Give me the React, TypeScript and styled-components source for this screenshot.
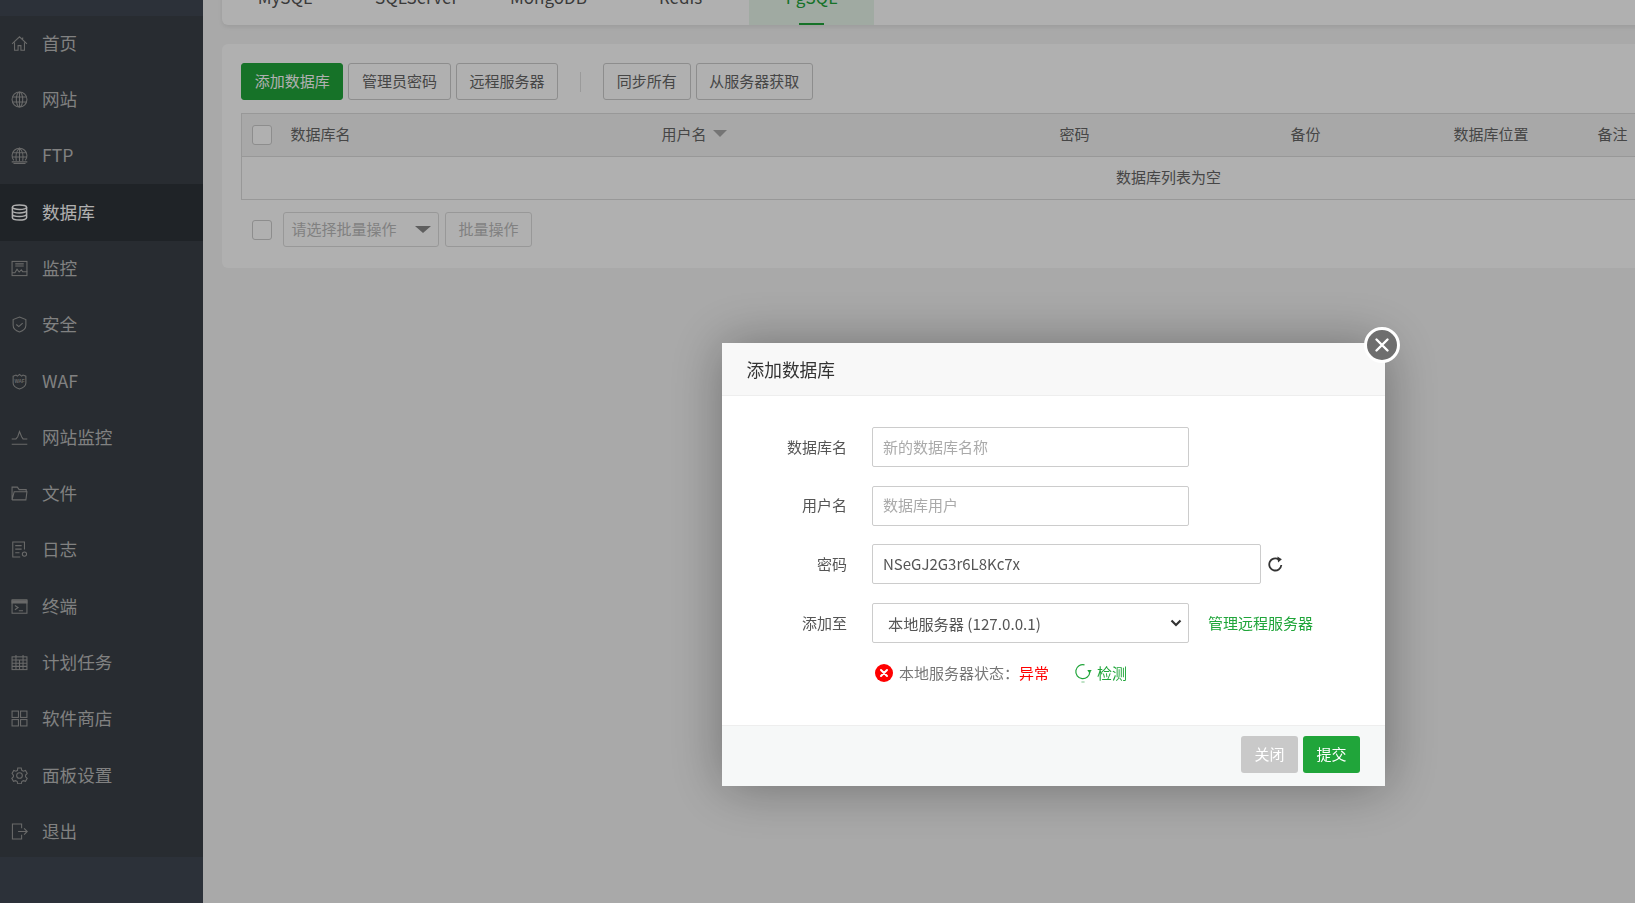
import React from 'react'
import styled, { createGlobalStyle } from 'styled-components'

const FONT = '"Noto Sans CJK SC", "Noto Sans", sans-serif'

const CHEVRON =
  "data:image/svg+xml,%3Csvg xmlns='http://www.w3.org/2000/svg' width='12' height='8' viewBox='0 0 12 8'%3E%3Cpath d='M1.5 1.5 6 6l4.500-4.500' fill='none' stroke='%23333' stroke-width='2.200'/%3E%3C/svg%3E"

const paths: Record<string, React.ReactNode> = {
  home: <path d="M1.500 12.500 12 2.500l10.500 10M5 10.500V21.500h5v-6.500h4v6.500h5V10.500M16.500 3.500v4" />,
  globe: (
    <>
      <circle cx="12" cy="12" r="10.500" />
      <ellipse cx="12" cy="12" rx="4.500" ry="10.500" />
      <path d="M2 8.500h20M2 15.500h20M12 1.500v21" />
    </>
  ),
  ftp: (
    <>
      <path d="M4 19a10.500 10.500 0 1 1 16 0" />
      <path d="M7.500 19.500C6 11 8 5 12 1.500c4 3.500 6 9.500 4.500 18M12 1.500v18.500M2.500 8h19M1.500 14h21" />
      <path d="M1 21h22M3.500 23.500h17" />
    </>
  ),
  database: (
    <>
      <ellipse cx="12" cy="4.500" rx="10" ry="3.200" />
      <path d="M2 4.500v15c0 1.800 4.500 3.200 10 3.200s10-1.400 10-3.200v-15M2 9.500c0 1.800 4.500 3.200 10 3.200s10-1.400 10-3.200M2 14.500c0 1.800 4.500 3.200 10 3.200s10-1.400 10-3.200" />
    </>
  ),
  monitor: (
    <>
      <rect x="1.500" y="2" width="21" height="20" />
      <path d="M6 5.500h12M6 8.500h12M1.500 18h4l3-5 3 4 3-3 2 2.500h6.500" />
    </>
  ),
  shield: (
    <>
      <path d="M12 1.500 21 5v8c0 5-4.500 8-9 9.500C7.500 21 3 18 3 13V5z" />
      <path d="m7.500 12 3.500 3 5.500-5" />
    </>
  ),
  waf: (
    <>
      <path d="M3 4.500 7 3l2 1.500L12 2l3 2.500L17 3l4 1.500V14c0 4.500-4.500 7-9 8.500C7.500 21 3 18.500 3 14z" />
      <text x="12" y="14.500" textAnchor="middle" fontSize="6.500" fontWeight="700" fill="currentColor" stroke="none" fontFamily="Liberation Sans, sans-serif">WAF</text>
    </>
  ),
  pulse: <path d="M1 14h6l2.500-3L12 3.500 15 11l2 3h6M1 21.500h22" />,
  folder: <path d="M1.500 21V3h7.500l2.500 3.500h10V9.500M1.500 21h19.500l1.500-11.500H4.500L1.500 21" />,
  log: (
    <>
      <path d="M19 12V1.500H2.500v21H13" />
      <path d="M6 6.500h9M6 11.500h9M6 16.500h6" />
      <circle cx="19" cy="18.500" r="3" />
    </>
  ),
  terminal: (
    <>
      <rect x="1.500" y="2.500" width="21" height="19" />
      <path d="M1.500 4h21v3h-21z" fill="currentColor" />
      <path d="m5.500 10.500 4.500 3-4.500 3M11 18h6" />
    </>
  ),
  calendar: (
    <>
      <rect x="1.500" y="4" width="21" height="18" />
      <path d="M1.500 8.500h21M1.500 13h21M1.500 17.500h21M7 1.500V22M12 8.500V22M17 1.500V22" />
    </>
  ),
  apps: (
    <>
      <rect x="1.500" y="1.500" width="9" height="9" />
      <rect x="13.500" y="1.500" width="9" height="9" />
      <rect x="1.500" y="13.500" width="9" height="9" />
      <rect x="13.500" y="13.500" width="9" height="9" />
    </>
  ),
  gear: (
    <>
      <path d="M9.500 1.500h5l.7 3.200 2.200 1.200 3.100-1 2.400 4.300-2.300 2.200v2.400l2.300 2.200-2.400 4.300-3.100-1-2.200 1.200-.7 3.200h-5l-.7-3.200-2.200-1.200-3.100 1-2.400-4.300 2.300-2.200v-2.400L1.500 9.200l2.400-4.300 3.100 1 2.200-1.200z" />
      <circle cx="12" cy="12" r="4" />
    </>
  ),
  logout: <path d="M15 7.500V1.500H2v21h13v-6M10 12h13M18.500 7.500 23 12l-4.500 4.500" />,
}

const menu = [
  { name: '首页', icon: 'home' },
  { name: '网站', icon: 'globe' },
  { name: 'FTP', icon: 'ftp' },
  { name: '数据库', icon: 'database', active: true },
  { name: '监控', icon: 'monitor' },
  { name: '安全', icon: 'shield' },
  { name: 'WAF', icon: 'waf' },
  { name: '网站监控', icon: 'pulse' },
  { name: '文件', icon: 'folder' },
  { name: '日志', icon: 'log' },
  { name: '终端', icon: 'terminal' },
  { name: '计划任务', icon: 'calendar' },
  { name: '软件商店', icon: 'apps' },
  { name: '面板设置', icon: 'gear' },
  { name: '退出', icon: 'logout' },
]

const tabs = [
  { name: 'MySQL', w: 126 },
  { name: 'SQLServer', w: 127 },
  { name: 'MongoDB', w: 127 },
  { name: 'Redis', w: 127 },
  { name: 'PgSQL', w: 125, active: true },
]

const columns = [
  { name: '数据库名', w: 371 },
  { name: '用户名', w: 398, sort: true },
  { name: '密码', w: 231 },
  { name: '备份', w: 163 },
  { name: '数据库位置', w: 144 },
  { name: '备注', w: 508 },
]

const App: React.FC = () => {
  return (
    <Page>
      <GlobalStyle />
      <Sidebar>
        <MenuList>
          {menu.map((item) => (
            <MenuItem key={item.name} $active={item.active}>
              <MenuIcon viewBox="0 0 24 24">{paths[item.icon]}</MenuIcon>
              <span>{item.name}</span>
            </MenuItem>
          ))}
        </MenuList>
      </Sidebar>

      <Main>
        <TabCard>
          {tabs.map((tab) => (
            <Tab key={tab.name} $w={tab.w} $active={tab.active}>
              {tab.name}
              {tab.active ? <TabLine /> : null}
            </Tab>
          ))}
        </TabCard>

        <ListCard>
          <Toolbar>
            <PrimaryButton>添加数据库</PrimaryButton>
            <ToolButton>管理员密码</ToolButton>
            <ToolButton>远程服务器</ToolButton>
            <ToolDivider />
            <ToolButton>同步所有</ToolButton>
            <ToolButton>从服务器获取</ToolButton>
          </Toolbar>

          <Table>
            <colgroup>
              <col style={{ width: 39 }} />
              {columns.map((c) => (
                <col key={c.name} style={{ width: c.w }} />
              ))}
            </colgroup>
            <thead>
              <tr>
                <Th>
                  <CheckBox />
                </Th>
                {columns.map((c) => (
                  <Th key={c.name}>
                    {c.name}
                    {c.sort ? <SortArrow /> : null}
                  </Th>
                ))}
              </tr>
            </thead>
            <tbody>
              <tr>
                <EmptyCell colSpan={7}>数据库列表为空</EmptyCell>
              </tr>
            </tbody>
          </Table>

          <BatchRow>
            <CheckBox />
            <BatchSelect>
              请选择批量操作
              <BatchArrow />
            </BatchSelect>
            <BatchButton>批量操作</BatchButton>
          </BatchRow>
        </ListCard>
      </Main>

      <Overlay />

      <Modal>
        <ModalClose>
          <svg width="16" height="16" viewBox="0 0 16 16">
            <path d="M2.500 2.500l11 11M13.500 2.500l-11 11" stroke="#fff" strokeWidth="2.400" strokeLinecap="round" />
          </svg>
        </ModalClose>
        <ModalHeader>添加数据库</ModalHeader>
        <ModalBody>
          <FormRow>
            <FormLabel>数据库名</FormLabel>
            <TextInput placeholder="新的数据库名称" />
          </FormRow>
          <FormRow>
            <FormLabel>用户名</FormLabel>
            <TextInput placeholder="数据库用户" />
          </FormRow>
          <FormRow>
            <FormLabel>密码</FormLabel>
            <TextInput $wide defaultValue="NSeGJ2G3r6L8Kc7x" />
            <RefreshIcon width="17" height="17" viewBox="0 0 16 16">
              <path d="M13.500 8.500A5.700 5.700 0 1 1 11 3.200" fill="none" stroke="#333" strokeWidth="1.700" />
              <path d="M9.800 0.500 14 3l-3.600 3z" fill="#333" />
            </RefreshIcon>
          </FormRow>
          <FormRow>
            <FormLabel>添加至</FormLabel>
            <ServerSelect defaultValue="local">
              <option value="local">本地服务器 (127.0.0.1)</option>
            </ServerSelect>
            <ManageLink>管理远程服务器</ManageLink>
          </FormRow>
          <StatusRow>
            <svg width="18" height="18" viewBox="0 0 18 18">
              <circle cx="9" cy="9" r="9" fill="#f00" />
              <path d="m6 6 6 6M12 6l-6 6" stroke="#fff" strokeWidth="2" strokeLinecap="round" />
            </svg>
            <StatusText>本地服务器状态：</StatusText>
            <StatusBad>异常</StatusBad>
            <CheckLink>
              <svg width="18" height="24" viewBox="0 0 18 24">
                <path d="M15.800 11A7 7 0 1 1 10.500 3.900" fill="none" stroke="#20a53a" strokeWidth="1.200" />
                <path d="M13.300 9h4.400L15.500 12.500z" fill="#20a53a" />
                <ellipse cx="9" cy="21" rx="2" ry=".8" fill="#9fd4aa" />
              </svg>
              检测
            </CheckLink>
          </StatusRow>
        </ModalBody>
        <ModalFooter>
          <CloseButton>关闭</CloseButton>
          <SubmitButton>提交</SubmitButton>
        </ModalFooter>
      </Modal>
    </Page>
  )
}

export default App

const GlobalStyle = createGlobalStyle`
  html, body {
    margin: 0;
    height: 100%;
    overflow: hidden;
  }
  body {
    font-family: ${FONT};
    font-size: 15px;
    color: #666;
  }
  * {
    box-sizing: border-box;
  }
`

const Page = styled.div`
  display: flex;
  width: 100%;
  height: 100vh;
  background: #f5f5f5;
  overflow: hidden;
`

const Sidebar = styled.div`
  flex: 0 0 203px;
  height: 100%;
  padding-top: 15.6px;
  background: #404753;
`

const MenuList = styled.div`
  display: flex;
  flex-direction: column;
  height: 841.4px;
  background: #3a4147;
`

const MenuItem = styled.div<{ $active?: boolean }>`
  flex: 0 0 56.3px;
  display: flex;
  align-items: center;
  gap: 14px;
  padding-left: 11px;
  font-size: 17.6px;
  color: ${(p) => (p.$active ? '#fff' : '#bbb')};
  background: ${(p) => (p.$active ? '#2e3339' : 'transparent')};

  span {
    padding-bottom: 3px;
  }

  svg {
    color: ${(p) => (p.$active ? '#fff' : '#999')};
    stroke-width: ${(p) => (p.$active ? 2.2 : 1.5)};
  }
`

const MenuIcon = styled.svg`
  flex: 0 0 17px;
  width: 17px;
  height: 17px;
  margin-bottom: 1px;
  fill: none;
  stroke: currentColor;
`

const Main = styled.div`
  flex: 1;
  min-width: 0;
  padding-left: 19px;
  overflow: hidden;
`

const TabCard = styled.div`
  display: flex;
  gap: 5px;
  width: 1892px;
  height: 56px;
  margin-top: -31px;
  background: #fff;
  border-radius: 6px;
  box-shadow: 0 2px 4px rgba(0, 0, 0, 0.08);
`

const Tab = styled.div<{ $w: number; $active?: boolean }>`
  position: relative;
  flex: 0 0 ${(p) => p.$w}px;
  line-height: 56px;
  text-align: center;
  font-size: 17px;
  color: ${(p) => (p.$active ? '#20a53a' : '#555')};
  background: ${(p) => (p.$active ? 'rgba(32, 165, 58, 0.1)' : 'transparent')};
`

const TabLine = styled.div`
  position: absolute;
  left: 50%;
  bottom: 0;
  width: 25px;
  height: 2px;
  margin-left: -12.5px;
  background: #20a53a;
`

const ListCard = styled.div`
  width: 1892px;
  height: 224px;
  margin-top: 19px;
  padding: 19px;
  background: #fff;
  border-radius: 6px;
`

const Toolbar = styled.div`
  display: flex;
  align-items: center;
  gap: 5px;
`

const ToolButton = styled.button`
  height: 37px;
  padding: 0 12.7px 2px;
  border: 1px solid #ccc;
  border-radius: 3px;
  background: #fff;
  font-family: inherit;
  font-size: 15px;
  color: #666;
`

const PrimaryButton = styled(ToolButton)`
  border-color: #20a53a;
  background: #20a53a;
  color: #fff;
`

const ToolDivider = styled.div`
  width: 1px;
  height: 20px;
  margin: 0 17px;
  background: #e0e0e0;
`

const Table = styled.table`
  width: 1854px;
  margin-top: 13px;
  border-collapse: collapse;
  table-layout: fixed;
  border: 1px solid #ddd;
`

const Th = styled.th`
  height: 43px;
  padding: 0 10px 3px;
  text-align: left;
  font-weight: 400;
  font-size: 15px;
  color: #666;
  background: #f4f4f4;
  border-bottom: 1px solid #ddd;

  &:first-child {
    padding: 0 0 0 10px;
  }
`

const EmptyCell = styled.td`
  height: 43px;
  padding-bottom: 4px;
  text-align: center;
  font-size: 15px;
  color: #666;
`

const CheckBox = styled.div`
  flex: none;
  width: 20px;
  height: 20px;
  border: 1px solid #ccc;
  border-radius: 3px;
  background: #fff;
`

const SortArrow = styled.span`
  display: inline-block;
  margin-left: 6px;
  border-style: solid;
  border-width: 7px 7px 0;
  border-color: #aaa transparent transparent;
  vertical-align: 3px;
`

const BatchRow = styled.div`
  display: flex;
  align-items: center;
  height: 35px;
  margin-top: 12px;
  padding-left: 10.5px;
`

const BatchSelect = styled.div`
  position: relative;
  width: 156px;
  height: 35px;
  margin-left: 11.5px;
  padding-left: 7.5px;
  line-height: 31px;
  border: 1px solid #ddd;
  border-radius: 3px;
  font-size: 15px;
  color: #bbb;
`

const BatchArrow = styled.span`
  position: absolute;
  right: 7px;
  top: 13px;
  border-style: solid;
  border-width: 7px 8px 0;
  border-color: #888 transparent transparent;
`

const BatchButton = styled.div`
  width: 87px;
  height: 35px;
  margin-left: 6px;
  line-height: 31px;
  text-align: center;
  border: 1px solid #ddd;
  border-radius: 3px;
  font-size: 15px;
  color: #bbb;
`

const Overlay = styled.div`
  position: fixed;
  inset: 0;
  background: rgba(0, 0, 0, 0.31);
`

const Modal = styled.div`
  position: fixed;
  left: 722px;
  top: 343px;
  display: flex;
  flex-direction: column;
  width: 663px;
  height: 443px;
  background: #fff;
  box-shadow: 1px 1px 50px rgba(0, 0, 0, 0.35);
`

const ModalClose = styled.div`
  position: absolute;
  right: -15px;
  top: -16px;
  display: flex;
  align-items: center;
  justify-content: center;
  width: 36px;
  height: 36px;
  border: 3px solid #fff;
  border-radius: 50%;
  background: #6e6e6e;
`

const ModalHeader = styled.div`
  flex: none;
  height: 53px;
  padding-left: 24.5px;
  line-height: 52px;
  font-size: 17.7px;
  color: #333;
  background: #f8f8f8;
  border-bottom: 1px solid #eee;
`

const ModalBody = styled.div`
  flex: 1;
  display: flex;
  flex-direction: column;
  gap: 18.67px;
  padding-top: 31px;
`

const FormRow = styled.div`
  display: flex;
  align-items: center;
  height: 40px;
`

const FormLabel = styled.div`
  flex: 0 0 125px;
  margin-right: 25px;
  padding-bottom: 1.5px;
  text-align: right;
  font-size: 15px;
  color: #555;
`

const TextInput = styled.input<{ $wide?: boolean }>`
  width: ${(p) => (p.$wide ? '389px' : '317px')};
  height: 40px;
  padding: 0 10px 2px;
  border: 1px solid #ccc;
  border-radius: 2px;
  outline: none;
  font-family: inherit;
  font-size: 15px;
  color: #555;

  &::placeholder {
    color: #aaa;
  }
`

const RefreshIcon = styled.svg`
  margin-left: 6px;
`

const ServerSelect = styled.select`
  width: 317px;
  height: 40px;
  padding: 0 15px;
  appearance: none;
  border: 1px solid #ccc;
  border-radius: 2px;
  outline: none;
  background: #fff url("${CHEVRON}") no-repeat right 6px center;
  font-family: inherit;
  font-size: 15.2px;
  color: #555;
`

const ManageLink = styled.a`
  margin-left: 19px;
  font-size: 15px;
  color: #20a53a;
`

const StatusRow = styled.div`
  display: flex;
  align-items: center;
  height: 24px;
  margin-top: -1px;
  padding-left: 153px;
  font-size: 15px;
`

const StatusText = styled.span`
  margin-left: 6px;
  color: #777;
`

const StatusBad = styled.span`
  color: #f00;
`

const CheckLink = styled.a`
  display: flex;
  align-items: center;
  gap: 5px;
  margin-left: 25px;
  color: #20a53a;
`

const ModalFooter = styled.div`
  flex: none;
  display: flex;
  align-items: flex-start;
  justify-content: flex-end;
  gap: 5px;
  height: 61px;
  padding: 10px 25px 0 0;
  background: #f6f8f8;
  border-top: 1px solid #eee;
`

const CloseButton = styled.button`
  width: 57px;
  height: 37px;
  padding: 0 0 2px;
  border: none;
  border-radius: 3px;
  background: #c9c9c9;
  font-family: inherit;
  font-size: 15px;
  color: #fff;
`

const SubmitButton = styled(CloseButton)`
  background: #20a53a;
`
